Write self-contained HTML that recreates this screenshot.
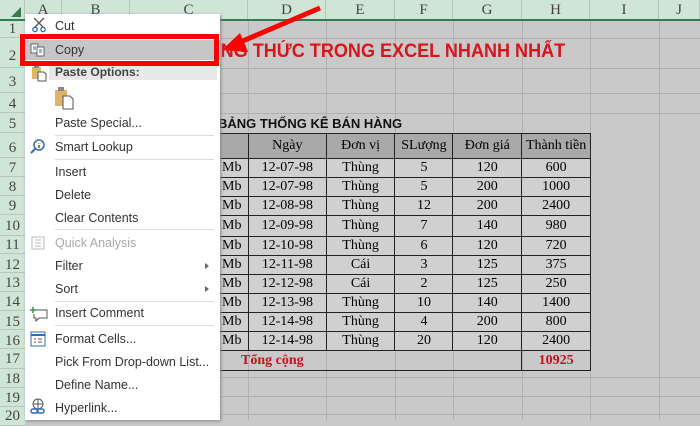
<!DOCTYPE html>
<html><head><meta charset="utf-8"><style>
*{margin:0;padding:0;box-sizing:border-box}
body{width:700px;height:420px;overflow:hidden;background:#c9c9c9;position:relative;font-family:"Liberation Sans",sans-serif}
.a{position:absolute}
.colh{top:0;height:20px;background:#cfe6d6;border-right:1px solid #b5c7ba;color:#444;font:15px "Liberation Serif",serif;text-align:center;line-height:20px}
.rowh{left:0;width:25px;background:#cfe6d6;border-bottom:1px solid #b5c7ba;color:#444;font:15px "Liberation Serif",serif;text-align:center}
.vl{top:20px;bottom:0;width:1px;background:#b0b0b0}
.hl{left:25px;right:0;height:1px;background:#b0b0b0}
.menu{left:25px;top:14px;width:195px;height:406px;background:#fff;box-shadow:1px 1px 3px #888}
.it{position:absolute;left:30px;font-size:12.5px;color:#333}
.sep{position:absolute;left:30px;right:6px;height:1px;background:#ddd}
td{border:1.5px solid #222;font:14px "Liberation Serif",serif;text-align:center;height:19px;padding:0}
td.mb{text-align:left;padding-left:51px}
table{border-collapse:collapse}
</style></head><body>
<div class="a vl" style="left:62px"></div><div class="a vl" style="left:130px"></div><div class="a vl" style="left:248px"></div><div class="a vl" style="left:326px"></div><div class="a vl" style="left:395px"></div><div class="a vl" style="left:453px"></div><div class="a vl" style="left:522px"></div><div class="a vl" style="left:590px"></div><div class="a vl" style="left:659px"></div>
<div class="a hl" style="top:38px"></div><div class="a hl" style="top:68px"></div><div class="a hl" style="top:93px"></div><div class="a hl" style="top:113px"></div><div class="a hl" style="top:377px"></div><div class="a hl" style="top:396px"></div><div class="a hl" style="top:414px"></div>
<div class="a colh" style="left:0;width:25px;background:#cfe6d6"><div style="position:absolute;right:3px;bottom:3px;width:0;height:0;border-left:10px solid transparent;border-bottom:10px solid #3a7a52"></div></div>
<div class="a colh" style="left:25px;width:37px">A</div><div class="a colh" style="left:62px;width:68px">B</div><div class="a colh" style="left:130px;width:118px">C</div><div class="a colh" style="left:248px;width:78px">D</div><div class="a colh" style="left:326px;width:69px">E</div><div class="a colh" style="left:395px;width:58px">F</div><div class="a colh" style="left:453px;width:69px">G</div><div class="a colh" style="left:522px;width:68px">H</div><div class="a colh" style="left:590px;width:69px">I</div><div class="a colh" style="left:659px;width:41px">J</div>
<div class="a" style="left:0;top:19px;width:700px;height:2px;background:#2f7d4c"></div>
<div class="a rowh" style="top:21px;height:17px;line-height:17px">1</div>
<div class="a rowh" style="top:38px;height:30px;line-height:36px">2</div>
<div class="a rowh" style="top:68px;height:25px;line-height:28px">3</div>
<div class="a rowh" style="top:93px;height:20px;line-height:22px">4</div>
<div class="a rowh" style="top:113px;height:20px;line-height:22px">5</div>
<div class="a rowh" style="top:133px;height:25px;line-height:30px">6</div>
<div class="a rowh" style="top:158px;height:19px;line-height:20px">7</div>
<div class="a rowh" style="top:177px;height:19px;line-height:20px">8</div>
<div class="a rowh" style="top:196px;height:19px;line-height:20px">9</div>
<div class="a rowh" style="top:215px;height:21px;line-height:22px">10</div>
<div class="a rowh" style="top:236px;height:18px;line-height:18px">11</div>
<div class="a rowh" style="top:254px;height:19px;line-height:22px">12</div>
<div class="a rowh" style="top:273px;height:19px;line-height:20px">13</div>
<div class="a rowh" style="top:292px;height:19px;line-height:20px">14</div>
<div class="a rowh" style="top:311px;height:19px;line-height:22px">15</div>
<div class="a rowh" style="top:330px;height:19px;line-height:22px">16</div>
<div class="a rowh" style="top:349px;height:20px;line-height:20px">17</div>
<div class="a rowh" style="top:369px;height:19px;line-height:20px">18</div>
<div class="a rowh" style="top:388px;height:19px;line-height:20px">19</div>
<div class="a rowh" style="top:407px;height:19px;line-height:18px">20</div>
<div class="a" style="right:135px;top:41px;font-size:19px;font-weight:bold;color:#d8141c;white-space:nowrap;transform:scaleX(0.95);transform-origin:right">CÔNG THỨC TRONG EXCEL NHANH NHẤT</div>
<div class="a" style="left:218px;top:116px;font-size:13px;font-weight:bold;color:#111;white-space:nowrap">BẢNG THỐNG KÊ BÁN HÀNG</div>
<table class="a" style="left:170px;top:133px;width:421px">
<colgroup><col style="width:78px"><col style="width:78px"><col style="width:69px"><col style="width:58px"><col style="width:69px"><col style="width:69px"></colgroup>
<tr style="background:#a9a9a9"><td style="height:25px"></td><td>Ngày</td><td>Đơn vị</td><td>SLượng</td><td>Đơn giá</td><td>Thành tiền</td></tr>
<tr style="background:#d0d0d0"><td class="mb">Mb</td><td>12-07-98</td><td>Thùng</td><td>5</td><td>120</td><td>600</td></tr>
<tr style="background:#d0d0d0"><td class="mb">Mb</td><td>12-07-98</td><td>Thùng</td><td>5</td><td>200</td><td>1000</td></tr>
<tr style="background:#d0d0d0"><td class="mb">Mb</td><td>12-08-98</td><td>Thùng</td><td>12</td><td>200</td><td>2400</td></tr>
<tr style="background:#d0d0d0"><td class="mb" style="height:21px">Mb</td><td>12-09-98</td><td>Thùng</td><td>7</td><td>140</td><td>980</td></tr>
<tr style="background:#d0d0d0"><td class="mb" style="height:18px">Mb</td><td>12-10-98</td><td>Thùng</td><td>6</td><td>120</td><td>720</td></tr>
<tr style="background:#d0d0d0"><td class="mb">Mb</td><td>12-11-98</td><td>Cái</td><td>3</td><td>125</td><td>375</td></tr>
<tr style="background:#d0d0d0"><td class="mb">Mb</td><td>12-12-98</td><td>Cái</td><td>2</td><td>125</td><td>250</td></tr>
<tr style="background:#d0d0d0"><td class="mb">Mb</td><td>12-13-98</td><td>Thùng</td><td>10</td><td>140</td><td>1400</td></tr>
<tr style="background:#d0d0d0"><td class="mb">Mb</td><td>12-14-98</td><td>Thùng</td><td>4</td><td>200</td><td>800</td></tr>
<tr style="background:#d0d0d0"><td class="mb">Mb</td><td>12-14-98</td><td>Thùng</td><td>20</td><td>120</td><td>2400</td></tr>
<tr><td colspan="5" style="height:20px;color:#c8101a;font-weight:bold;border-right:1.5px solid #222;text-align:left;padding-left:70px">Tổng cộng</td><td style="color:#c8101a;font-weight:bold">10925</td></tr>
</table>
<div class="a menu">
<svg class="a" style="left:6px;top:3px" width="16" height="16" viewBox="0 0 16 16"><path d="M3 1l9 9M13 1L4 10" stroke="#555" stroke-width="1.3" fill="none"/><circle cx="4" cy="12.5" r="2.2" stroke="#2f6db5" fill="none" stroke-width="1.3"/><circle cx="12" cy="12.5" r="2.2" stroke="#2f6db5" fill="none" stroke-width="1.3"/></svg>
<div class="it" style="top:5px">Cut</div>
<div class="a" style="left:0;top:26px;width:195px;height:20px;background:#c6c6c6"></div>
<svg class="a" style="left:5px;top:28px" width="16" height="16" viewBox="0 0 16 16"><rect x="1" y="2" width="7" height="9" fill="#fff" stroke="#666"/><rect x="7" y="5" width="7" height="9" fill="#fff" stroke="#666"/><path d="M3 5h3M3 7h3M9 8h3M9 10h3" stroke="#2f6db5"/></svg>
<div class="it" style="top:29px">Copy</div>
<div class="a" style="left:24px;top:48px;width:168px;height:18px;background:#e8e8e8"></div>
<svg class="a" style="left:6px;top:50px" width="16" height="18" viewBox="0 0 16 18"><rect x="1" y="3" width="9" height="12" fill="#e0b36b"/><rect x="3" y="1" width="5" height="3" fill="#888"/><path d="M7 8h6l2 2v7H7z" fill="#fff" stroke="#555"/></svg>
<div class="it" style="top:51px;font-weight:bold;color:#444;font-size:12px">Paste Options:</div>
<svg class="a" style="left:29px;top:72px" width="20" height="24" viewBox="0 0 20 24"><rect x="1" y="4" width="12" height="16" fill="#e0b36b"/><rect x="4" y="1" width="6" height="4" fill="#888"/><path d="M9 10h7l3 3v10H9z" fill="#fff" stroke="#555"/></svg>
<div class="it" style="top:102px">Paste Special...</div>
<div class="sep" style="top:121px"></div>
<svg class="a" style="left:5px;top:125px" width="16" height="16" viewBox="0 0 16 16"><circle cx="9" cy="6" r="5" stroke="#2f6db5" stroke-width="1.5" fill="#fff"/><path d="M5 10L1 14" stroke="#2f6db5" stroke-width="2"/><path d="M9 4v.5M9 6v3" stroke="#333" stroke-width="1.3"/></svg>
<div class="it" style="top:126px">Smart Lookup</div>
<div class="sep" style="top:145px"></div>
<div class="it" style="top:151px">Insert</div>
<div class="it" style="top:174px">Delete</div>
<div class="it" style="top:197px">Clear Contents</div>
<div class="sep" style="top:215px"></div>
<svg class="a" style="left:6px;top:222px" width="14" height="14" viewBox="0 0 14 14"><rect x="1" y="1" width="12" height="12" fill="none" stroke="#bbb"/><path d="M4 4h6M4 7h6M4 10h6" stroke="#bbb"/></svg>
<div class="it" style="top:222px;color:#aaa">Quick Analysis</div>
<div class="it" style="top:245px">Filter</div><div class="a" style="left:180px;top:249px;border-left:4px solid #666;border-top:3.5px solid transparent;border-bottom:3.5px solid transparent"></div>
<div class="it" style="top:268px">Sort</div><div class="a" style="left:180px;top:272px;border-left:4px solid #666;border-top:3.5px solid transparent;border-bottom:3.5px solid transparent"></div>
<div class="sep" style="top:287px"></div>
<svg class="a" style="left:5px;top:292px" width="18" height="16" viewBox="0 0 18 16"><path d="M6 4h11v8H9l-3 3v-3H4V8" fill="none" stroke="#555"/><path d="M3 1v6M0 4h6" stroke="#2a9a4a" stroke-width="1.5"/></svg>
<div class="it" style="top:292px">Insert Comment</div>
<div class="sep" style="top:311px"></div>
<svg class="a" style="left:5px;top:317px" width="16" height="16" viewBox="0 0 16 16"><rect x="1" y="1" width="14" height="14" fill="#fff" stroke="#2f6db5"/><path d="M1 4h14" stroke="#2f6db5" stroke-width="2"/><path d="M4 8h2M4 11h2M8 8h4M8 11h4" stroke="#555"/></svg>
<div class="it" style="top:318px">Format Cells...</div>
<div class="it" style="top:341px">Pick From Drop-down List...</div>
<div class="it" style="top:364px">Define Name...</div>
<svg class="a" style="left:5px;top:384px" width="16" height="18" viewBox="0 0 16 18"><circle cx="8" cy="6" r="5" fill="none" stroke="#555"/><path d="M3 6h10M8 1v10" stroke="#555"/><rect x="1" y="11" width="7" height="4" rx="2" fill="none" stroke="#2f6db5" stroke-width="1.5"/><rect x="7" y="11" width="7" height="4" rx="2" fill="none" stroke="#2f6db5" stroke-width="1.5"/></svg>
<div class="it" style="top:387px">Hyperlink...</div>
</div>
<div class="a" style="left:20px;top:34px;width:199px;height:32px;border:5px solid #f00"></div>
<svg class="a" style="left:210px;top:0" width="120" height="60" viewBox="0 0 120 60"><path d="M110 8L28 43" stroke="#f00" stroke-width="5"/><path d="M12 50L30 33L38 52Z" fill="#f00"/></svg>
</body></html>
